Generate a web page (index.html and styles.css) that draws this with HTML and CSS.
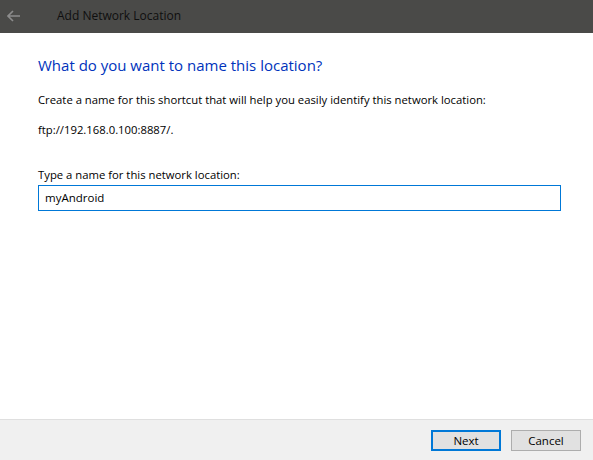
FILE: index.html
```html
<!DOCTYPE html>
<html>
<head>
<meta charset="utf-8">
<link rel="stylesheet" href="styles.css">
</head>
<body>
<div class="window">
  <div class="titlebar">
    <svg class="back" width="14" height="12" viewBox="0 0 14 12">
      <path d="M1 6 H13 M6 1 L1 6 L6 11" fill="none" stroke="#8c8c8c" stroke-width="1.6"/>
    </svg>
    <span class="title">Add Network Location</span>
  </div>
  <div class="content">
    <h1 class="heading">What do you want to name this location?</h1>
    <p class="text">Create a name for this shortcut that will help you easily identify this network location:</p>
    <p class="text url">ftp://192.168.0.100:8887/.</p>
    <label class="label">Type a name for this network location:</label>
    <div class="input">myAndroid</div>
  </div>
  <div class="footer">
    <button class="btn primary">Next</button>
    <button class="btn">Cancel</button>
  </div>
</div>
</body>
</html>
```
FILE: styles.css
```css
html, body {
  margin: 0;
  padding: 0;
  background: #ffffff;
}
.window {
  width: 593px;
  height: 460px;
  display: flex;
  flex-direction: column;
  font-family: "Open Sans", "Noto Sans", sans-serif;
  font-size: 11.4px;
  color: #000;
}
.titlebar {
  height: 33px;
  background: #4a4a48;
  display: flex;
  align-items: center;
  flex-shrink: 0;
}
.back {
  margin-left: 7px;
  margin-top: -2px;
}
.title {
  margin-left: 36px;
  margin-top: -3px;
  font-size: 12px;
  color: #0f0f0f;
}
.content {
  flex: 1;
  padding: 22px 32px 0 38px;
}
.heading {
  margin: 0;
  font-size: 15px;
  font-weight: normal;
  color: #0033bc;
  line-height: 20px;
}
.text {
  margin: 17px 0 0 0;
  line-height: 16px;
  font-size: 11.3px;
}
.url {
  margin-top: 14px;
}
.label {
  display: block;
  margin-top: 29px;
  line-height: 16px;
  font-size: 11.3px;
}
.input {
  margin-top: 2px;
  height: 24px;
  border: 1px solid #0078d7;
  padding: 0 6px;
  line-height: 24px;
  font-size: 11.5px;
  box-sizing: content-box;
  width: 509px;
}
.footer {
  height: 40px;
  flex-shrink: 0;
  background: #f0f0f0;
  border-top: 1px solid #dfdfdf;
  display: flex;
  justify-content: flex-end;
  align-items: center;
  gap: 10px;
  padding-right: 12px;
}
.btn {
  width: 70px;
  height: 21px;
  background: #e1e1e1;
  border: 1px solid #adadad;
  font-family: inherit;
  font-size: 11.5px;
  padding: 0;
  color: #000;
}
.btn.primary {
  border: 2px solid #0078d7;
}
```
